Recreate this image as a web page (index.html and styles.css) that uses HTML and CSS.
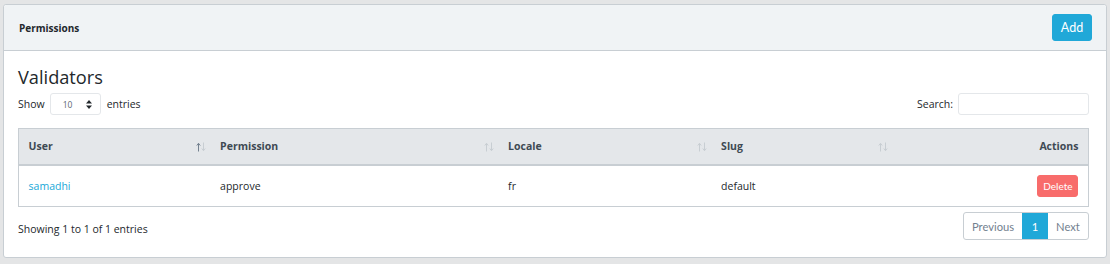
FILE: index.html
```html
<!DOCTYPE html>
<html>
<head>
<meta charset="utf-8">
<link rel="stylesheet" href="styles.css">
</head>
<body>
<div class="card">
  <div class="card-header">
    <strong class="card-title">Permissions</strong>
    <button class="btn btn-info">Add</button>
  </div>
  <div class="card-body">
    <h3 class="title">Validators</h3>
    <div class="controls">
      <label class="length">Show
        <span class="select"><span class="select-val">10</span>
          <svg class="updown" width="6" height="9" viewBox="0 0 6 9"><path d="M3 0L6 3.5H0Z M3 9L6 5.5H0Z" fill="#23282c"/></svg>
        </span>
        entries</label>
      <label class="search">Search: <span class="search-input"></span></label>
    </div>
    <table class="table">
      <thead>
        <tr>
          <th class="c1"><div class="th"><span>User</span><svg class="sort" width="10" height="10" viewBox="0 0 10 10"><path d="M2.5 1.5V9.5M0.8 3.5L2.5 1.3L4.2 3.5" stroke="#73818f" fill="none" stroke-width="1"/><path d="M7.5 0.5V8.5M5.8 6.5L7.5 8.7L9.2 6.5" stroke="#c8ced3" fill="none" stroke-width="1"/></svg></div></th>
          <th class="c2"><div class="th"><span>Permission</span><svg class="sort" width="10" height="10" viewBox="0 0 10 10"><path d="M2.5 1.5V9.5M0.8 3.5L2.5 1.3L4.2 3.5" stroke="#c8ced3" fill="none" stroke-width="1"/><path d="M7.5 0.5V8.5M5.8 6.5L7.5 8.7L9.2 6.5" stroke="#c8ced3" fill="none" stroke-width="1"/></svg></div></th>
          <th class="c3"><div class="th"><span>Locale</span><svg class="sort" width="10" height="10" viewBox="0 0 10 10"><path d="M2.5 1.5V9.5M0.8 3.5L2.5 1.3L4.2 3.5" stroke="#c8ced3" fill="none" stroke-width="1"/><path d="M7.5 0.5V8.5M5.8 6.5L7.5 8.7L9.2 6.5" stroke="#c8ced3" fill="none" stroke-width="1"/></svg></div></th>
          <th class="c4"><div class="th"><span>Slug</span><svg class="sort" width="10" height="10" viewBox="0 0 10 10"><path d="M2.5 1.5V9.5M0.8 3.5L2.5 1.3L4.2 3.5" stroke="#c8ced3" fill="none" stroke-width="1"/><path d="M7.5 0.5V8.5M5.8 6.5L7.5 8.7L9.2 6.5" stroke="#c8ced3" fill="none" stroke-width="1"/></svg></div></th>
          <th class="c5 right">Actions</th>
        </tr>
      </thead>
      <tbody>
        <tr>
          <td><a class="link" href="#">samadhi</a></td>
          <td>approve</td>
          <td>fr</td>
          <td>default</td>
          <td class="right"><button class="btn btn-danger">Delete</button></td>
        </tr>
      </tbody>
    </table>
    <div class="footer">
      <div class="info">Showing 1 to 1 of 1 entries</div>
      <div class="pagination">
        <span class="page">Previous</span>
        <span class="page active">1</span>
        <span class="page">Next</span>
      </div>
    </div>
  </div>
</div>
</body>
</html>
```

FILE: styles.css
```css
* { box-sizing: border-box; }
html, body { margin: 0; padding: 0; }
body {
  background: #e4e5e6;
  font-family: "Open Sans", "Noto Sans", sans-serif;
  font-size: 10.5px;
  color: #23282c;
  padding: 4px 4px 0 3px;
}
.card {
  background: #fff;
  border: 1px solid #c8ced3;
  border-radius: 3px;
  width: 1104px;
  height: 254px;
}
.card-header {
  display: flex;
  align-items: center;
  justify-content: space-between;
  height: 46px;
  background: #f0f3f5;
  border-bottom: 1px solid #c8ced3;
  padding: 0 14px 0 15px;
  border-radius: 3px 3px 0 0;
}
.card-title { font-weight: 700; font-size: 10px; }
.btn {
  font-family: "Lato", "Open Sans", sans-serif;
  border: 1px solid transparent;
  border-radius: 3px;
  color: #fff;
  cursor: pointer;
}
.btn-info {
  background: #20a8d8;
  border-color: #20a8d8;
  font-size: 12.5px;
  width: 40px;
  height: 27px;
  padding: 0;
}
.btn-danger {
  background: #f86c6b;
  border-color: #f86c6b;
  font-size: 10px;
  width: 41px;
  height: 22px;
  padding: 0;
}
.card-body { padding: 14px 17px 16px 14px; }
.title {
  margin: 0;
  font-weight: 400;
  font-size: 18.2px;
  line-height: 24px;
}
.controls {
  display: flex;
  justify-content: space-between;
  align-items: center;
  margin-top: 4px;
  height: 22px;
}
.length, .search { display: flex; align-items: center; }
.select {
  display: inline-flex;
  align-items: center;
  justify-content: space-between;
  width: 51px;
  height: 22px;
  border: 1px solid #e4e7ea;
  border-radius: 3px;
  margin: 0 6px 0 5px;
  padding: 0 8px 0 12px;
  font-size: 8.5px;
  color: #5c6873;
}
.search-input {
  display: inline-block;
  width: 131px;
  height: 22px;
  border: 1px solid #e4e7ea;
  border-radius: 3px;
  margin-left: 5px;
}
.table {
  width: 1071px;
  margin-top: 13px;
  border-collapse: collapse;
  border: 1px solid #c8ced3;
  table-layout: fixed;
}
.table th {
  background: #e4e7ea;
  font-weight: 700;
  text-align: left;
  height: 36px;
  padding: 0 9.6px;
  border-bottom: 2px solid #c8ced3;
  color: #3e4a53;
  border-top: 1px solid #c8ced3;
}
.th {
  display: flex;
  align-items: center;
  justify-content: space-between;
}
.sort { margin-right: -5px; margin-top: 1px; }
.table td {
  height: 42px;
  padding: 0 9.6px;
  border-bottom: 1px solid #c8ced3;
}
.c1 { width: 192px; }
.c2 { width: 288px; }
.c3 { width: 213px; }
.c4 { width: 181px; }
.right { text-align: right !important; }
.link { color: #20a8d8; text-decoration: none; }
.footer {
  display: flex;
  justify-content: space-between;
  align-items: center;
  margin-top: 5px;
}
.info { padding-top: 6px; }
.pagination {
  display: flex;
  border: 1px solid #c8ced3;
  border-radius: 3px;
  height: 28px;
}
.page {
  display: flex;
  align-items: center;
  justify-content: center;
  font-family: "Lato", "Open Sans", sans-serif;
  color: #73818f;
  font-size: 11.2px;
}
.page:nth-child(1) { width: 58px; }
.page:nth-child(2) { width: 26px; }
.page:nth-child(3) { width: 40px; }
.page.active { background: #20a8d8; color: #fff; }
```
